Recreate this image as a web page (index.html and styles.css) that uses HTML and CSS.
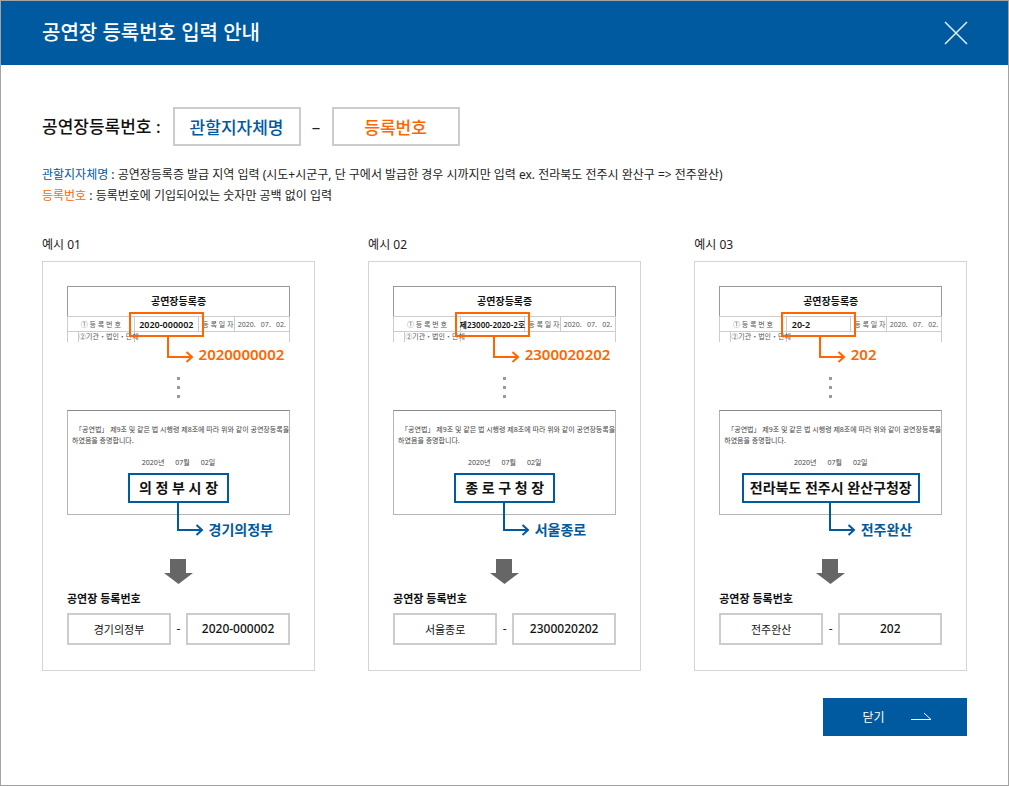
FILE: index.html
```html
<!DOCTYPE html>
<html lang="ko">
<head>
<meta charset="utf-8">
<meta name="viewport" content="width=device-width, initial-scale=1">
<title>공연장 등록번호 입력 안내</title>
<link rel="stylesheet" href="styles.css">
</head>
<body>
<svg class="sprite" aria-hidden="true">
  <symbol id="elbow-short" viewBox="0 0 28 28"><path d="M2 0V21H26M20.500 16L26 21L20.500 26" /></symbol>
  <symbol id="elbow-long" viewBox="0 0 28 36"><path d="M2 0V27H26M20.500 22L26 27L20.500 32" /></symbol>
  <symbol id="down" viewBox="0 0 29 25"><path d="M6 0H22V14H29L14.500 25L0 14H6Z" /></symbol>
</svg>
<div class="dialog">
  <header class="dialog-header">
    <h1 class="dialog-title">공연장 등록번호 입력 안내</h1>
    <button class="icon-close" type="button" aria-label="창 닫기">
      <svg width="24" height="24" viewBox="0 0 24 24"><path d="M1 1L23 23M23 1L1 23"/></svg>
    </button>
  </header>
  <main class="dialog-body">
    <div class="format">
      <span class="format-label">공연장등록번호 :</span>
      <input class="format-box blue" type="text" value="관할지자체명" aria-label="관할지자체명" readonly>
      <span class="format-dash">–</span>
      <input class="format-box orange" type="text" value="등록번호" aria-label="등록번호" readonly>
    </div>
    <div class="notes">
      <p><span class="blue">관할지자체명</span> : 공연장등록증 발급 지역 입력 (시도+시군구, 단 구에서 발급한 경우 시까지만 입력 ex. 전라북도 전주시 완산구 =&gt; 전주완산)</p>
      <p><span class="orange">등록번호</span> : 등록번호에 기입되어있는 숫자만 공백 없이 입력</p>
    </div>
    <div class="examples">
      <section class="example">
        <h2 class="example-title">예시 01</h2>
        <div class="card">
          <table class="certificate">
            <colgroup><col class="c1"><col class="c2"><col class="c3"><col class="c4"><col class="c5"></colgroup>
            <tr class="cert-title"><th colspan="5">공연장등록증</th></tr>
            <tr class="cert-row"><td colspan="2">① 등 록 번 호</td><td class="number"><span class="mark">2020-000002</span></td><td class="date-label">등 록 일 자</td><td class="date">2020.&ensp; 07.&ensp; 02.</td></tr>
            <tr class="cert-cut"><td></td><td>②기관・법인・단체</td><td colspan="3"></td></tr>
          </table>
          <div class="result orange"><svg width="28" height="28"><use href="#elbow-short"/></svg><span>2020000002</span></div>
          <div class="dots"><i></i><i></i><i></i></div>
          <div class="statement">
            <p>「공연법」 제9조 및 같은 법 시행령 제8조에 따라 위와 같이 공연장등록을<br>하였음을 증명합니다.</p>
            <div class="issued"><span>2020년</span><span>07월</span><span>02일</span></div>
            <strong class="issuer">의 정 부 시 장</strong>
          </div>
          <div class="result region blue"><svg width="28" height="36"><use href="#elbow-long"/></svg><span>경기의정부</span></div>
          <svg class="down" width="29" height="25"><use href="#down"/></svg>
          <h3 class="entry-title">공연장 등록번호</h3>
          <div class="entry"><input type="text" value="경기의정부" aria-label="관할지자체명" readonly><span>-</span><input class="digits" type="text" value="2020-000002" aria-label="등록번호" readonly></div>
        </div>
      </section>
      <section class="example">
        <h2 class="example-title">예시 02</h2>
        <div class="card">
          <table class="certificate">
            <colgroup><col class="c1"><col class="c2"><col class="c3"><col class="c4"><col class="c5"></colgroup>
            <tr class="cert-title"><th colspan="5">공연장등록증</th></tr>
            <tr class="cert-row"><td colspan="2">① 등 록 번 호</td><td class="number"><span class="mark mark-long">제23000-2020-2호</span></td><td class="date-label">등 록 일 자</td><td class="date">2020.&ensp; 07.&ensp; 02.</td></tr>
            <tr class="cert-cut"><td></td><td>②기관・법인・단체</td><td colspan="3"></td></tr>
          </table>
          <div class="result orange"><svg width="28" height="28"><use href="#elbow-short"/></svg><span>2300020202</span></div>
          <div class="dots"><i></i><i></i><i></i></div>
          <div class="statement">
            <p>「공연법」 제9조 및 같은 법 시행령 제8조에 따라 위와 같이 공연장등록을<br>하였음을 증명합니다.</p>
            <div class="issued"><span>2020년</span><span>07월</span><span>02일</span></div>
            <strong class="issuer">종 로 구 청 장</strong>
          </div>
          <div class="result region blue"><svg width="28" height="36"><use href="#elbow-long"/></svg><span>서울종로</span></div>
          <svg class="down" width="29" height="25"><use href="#down"/></svg>
          <h3 class="entry-title">공연장 등록번호</h3>
          <div class="entry"><input type="text" value="서울종로" aria-label="관할지자체명" readonly><span>-</span><input class="digits" type="text" value="2300020202" aria-label="등록번호" readonly></div>
        </div>
      </section>
      <section class="example">
        <h2 class="example-title">예시 03</h2>
        <div class="card">
          <table class="certificate">
            <colgroup><col class="c1"><col class="c2"><col class="c3"><col class="c4"><col class="c5"></colgroup>
            <tr class="cert-title"><th colspan="5">공연장등록증</th></tr>
            <tr class="cert-row"><td colspan="2">① 등 록 번 호</td><td class="number"><span class="mark mark-start">20-2</span></td><td class="date-label">등 록 일 자</td><td class="date">2020.&ensp; 07.&ensp; 02.</td></tr>
            <tr class="cert-cut"><td></td><td>②기관・법인・단체</td><td colspan="3"></td></tr>
          </table>
          <div class="result orange"><svg width="28" height="28"><use href="#elbow-short"/></svg><span>202</span></div>
          <div class="dots"><i></i><i></i><i></i></div>
          <div class="statement">
            <p>「공연법」 제9조 및 같은 법 시행령 제8조에 따라 위와 같이 공연장등록을<br>하였음을 증명합니다.</p>
            <div class="issued"><span>2020년</span><span>07월</span><span>02일</span></div>
            <strong class="issuer issuer-wide">전라북도 전주시 완산구청장</strong>
          </div>
          <div class="result region blue"><svg width="28" height="36"><use href="#elbow-long"/></svg><span>전주완산</span></div>
          <svg class="down" width="29" height="25"><use href="#down"/></svg>
          <h3 class="entry-title">공연장 등록번호</h3>
          <div class="entry"><input type="text" value="전주완산" aria-label="관할지자체명" readonly><span>-</span><input class="digits" type="text" value="202" aria-label="등록번호" readonly></div>
        </div>
      </section>
    </div>
    <button class="close-button" type="button">닫기
      <svg width="21" height="9" viewBox="0 0 21 9"><path d="M0 7.500H20L13 1"/></svg>
    </button>
  </main>
</div>
</body>
</html>
```

FILE: styles.css
```css
* {
  box-sizing: border-box;
}

body {
  margin: 0;
  background: #fff;
  color: #222;
  font: 12px/18px "Noto Sans", "Noto Sans CJK KR", sans-serif;
}

h1, h2, h3, p {
  margin: 0;
}

input, button {
  font-family: inherit;
}

.sprite {
  position: absolute;
  width: 0;
  height: 0;
}

.blue {
  color: #005a9f;
}

.orange {
  color: #ff6600;
}

.dialog {
  min-height: 100vh;
  border: 1px solid #a3a3a3;
}

.dialog-header {
  display: flex;
  align-items: center;
  justify-content: space-between;
  height: 64px;
  padding: 0 40px 0 41px;
  background: #005a9f;
}

.dialog-title {
  color: #fff;
  font-size: 20px;
  font-weight: 500;
  line-height: 28px;
}

.icon-close {
  display: flex;
  padding: 0;
  border: 0;
  background: none;
  cursor: pointer;
}

.icon-close path {
  fill: none;
  stroke: #e6f0f8;
  stroke-width: 1.5;
}

.dialog-body {
  display: flex;
  flex-direction: column;
  padding: 42px 41px 49px;
}

.format {
  display: flex;
  align-items: center;
  font-size: 17px;
}

.format-label {
  margin-right: 12px;
  color: #111;
  font-weight: 500;
}

.format-box {
  width: 128px;
  height: 39px;
  padding: 0;
  border: 2px solid #ccc;
  background: #fff;
  font-size: 17px;
  font-weight: 500;
  text-align: center;
}

.format-dash {
  width: 31px;
  text-align: center;
}

.notes {
  margin: 18px 0 30px;
  line-height: 21px;
}

.examples {
  display: grid;
  grid-template-columns: repeat(3, 1fr);
  gap: 53px;
}

.example-title {
  margin-bottom: 7px;
  font-size: 12px;
  font-weight: 400;
  line-height: 18px;
}

.card {
  display: flex;
  flex-direction: column;
  padding: 24px 24px 25px;
  border: 1px solid #d4d4d4;
}

.certificate {
  width: 100%;
  table-layout: fixed;
  border-collapse: collapse;
  border: 1px solid #999;
  border-bottom: 0;
  color: #555;
  font-size: 7px;
  line-height: 9px;
  text-align: center;
  white-space: nowrap;
}

.certificate td {
  padding: 0;
  border: 1px solid #ccc;
}

.c1 { width: 5%; }
.c2 { width: 25%; }
.c3 { width: 29%; }
.c4 { width: 16%; }
.c5 { width: 25%; }

.cert-title th {
  height: 30px;
  padding: 0;
  color: #111;
  font-size: 10px;
}

.cert-row {
  height: 15px;
}

.cert-cut {
  height: 10px;
}

.certificate .cert-cut td {
  border-bottom: 0;
}

.certificate .date-label {
  padding-left: 3px;
}

.number {
  position: relative;
}

.mark {
  position: absolute;
  inset: -5px -6px -6px;
  display: flex;
  align-items: center;
  justify-content: center;
  border: 2px solid #ff6600;
  color: #111;
  font-size: 9px;
  font-weight: 600;
}

.mark-long {
  font-size: 8px;
}

.mark-start {
  justify-content: flex-start;
  padding-left: 9px;
}

.result {
  display: flex;
  align-items: flex-end;
  gap: 5px;
  margin-top: -6px;
  padding-left: calc(50% - 13px);
  font-size: 15px;
  font-weight: 600;
  line-height: 20px;
  white-space: nowrap;
}

.result svg {
  flex: none;
  fill: none;
  stroke: currentColor;
  stroke-width: 2;
}

.region {
  margin-top: -12px;
  padding-left: calc(50% - 3px);
  font-size: 14px;
  line-height: 18px;
}

.dots {
  display: flex;
  flex-direction: column;
  align-items: center;
  gap: 6px;
  margin: 13px 0 12px;
}

.dots i {
  width: 3px;
  height: 3px;
  background: #999;
}

.statement {
  display: flex;
  flex-direction: column;
  align-items: center;
  padding: 13px 0 11px;
  border: 1px solid #b5b5b5;
  border-top-color: #888;
  color: #444;
  font-size: 7px;
  line-height: 11px;
}

.statement p {
  align-self: stretch;
  padding-left: 4px;
  text-indent: 3px;
  white-space: nowrap;
}

.issued {
  display: flex;
  gap: 11px;
  margin: 11px 0 5px;
}

.issuer {
  padding: 4px 9px;
  border: 2px solid #005a9f;
  background: #fff;
  color: #111;
  font-size: 14px;
  line-height: 18px;
  white-space: nowrap;
}

.issuer-wide {
  padding: 4px 6px;
}

.down {
  align-self: center;
  margin: 20px 0 7px;
  fill: #666;
}

.entry-title {
  margin-bottom: 6px;
  color: #111;
  font-size: 11px;
  font-weight: 600;
  line-height: 16px;
}

.entry {
  display: grid;
  grid-template-columns: 1fr 15px 1fr;
  align-items: center;
  text-align: center;
}

.entry input {
  width: 100%;
  min-width: 0;
  height: 32px;
  padding: 0;
  border: 2px solid #ccc;
  background: #fff;
  color: #111;
  font-size: 11px;
  text-align: center;
}

.entry .digits {
  font-size: 12px;
  font-weight: 500;
}

.close-button {
  display: flex;
  align-items: center;
  align-self: flex-end;
  justify-content: center;
  gap: 26px;
  width: 144px;
  height: 38px;
  margin-top: 27px;
  padding: 0 0 0 4px;
  border: 0;
  background: #005a9f;
  color: #fff;
  font-size: 12px;
  cursor: pointer;
}

.close-button path {
  fill: none;
  stroke: #fff;
}
```
